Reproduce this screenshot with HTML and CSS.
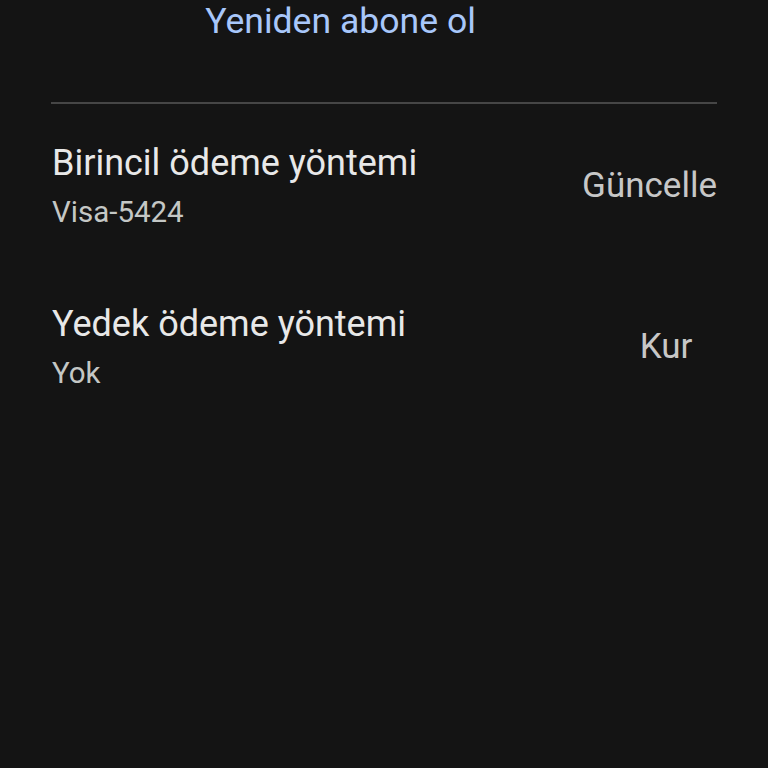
FILE: index.html
```html
<!DOCTYPE html>
<html lang="tr">
<head>
<meta charset="utf-8">
<link rel="stylesheet" href="styles.css">
</head>
<body>
<main class="screen">
  <div class="top">
    <a class="link">Yeniden abone ol</a>
  </div>
  <hr class="divider">
  <section class="row row-first">
    <div class="info">
      <div class="title">Birincil ödeme yöntemi</div>
      <div class="sub">Visa-5424</div>
    </div>
    <button class="action">Güncelle</button>
  </section>
  <section class="row row-second">
    <div class="info">
      <div class="title">Yedek ödeme yöntemi</div>
      <div class="sub">Yok</div>
    </div>
    <button class="action">Kur</button>
  </section>
</main>
</body>
</html>
```
FILE: styles.css
```css
html, body {
  margin: 0;
  padding: 0;
  background: #141414;
}
body {
  font-family: Roboto, "Noto Sans", sans-serif;
  width: 768px;
  height: 768px;
  overflow: hidden;
}
.screen {
  padding: 0 51px 0 52px;
}
.top {
  display: flex;
  justify-content: center;
  height: 42px;
}
.link {
  color: #a8c7fa;
  font-size: 35.6px;
  line-height: 42px;
  margin-right: 88px;
}
.divider {
  border: 0;
  height: 2px;
  background: #464646;
  margin: 60px 0 0 -1px;
}
.row {
  display: flex;
  align-items: center;
  justify-content: space-between;
}
.row-first {
  margin-top: 37px;
}
.row-second {
  margin-top: 72px;
}
.info {
  display: flex;
  flex-direction: column;
  gap: 9px;
}
.title {
  color: #e8e8e8;
  font-size: 36px;
  line-height: 44px;
}
.sub {
  color: #c4c7c5;
  font-size: 29.5px;
  line-height: 36px;
}
.action {
  background: none;
  border: 0;
  padding: 0;
  min-width: 102px;
  text-align: center;
  font-family: inherit;
  color: #c7c7c7;
  font-size: 35px;
  line-height: 44px;
}
```
